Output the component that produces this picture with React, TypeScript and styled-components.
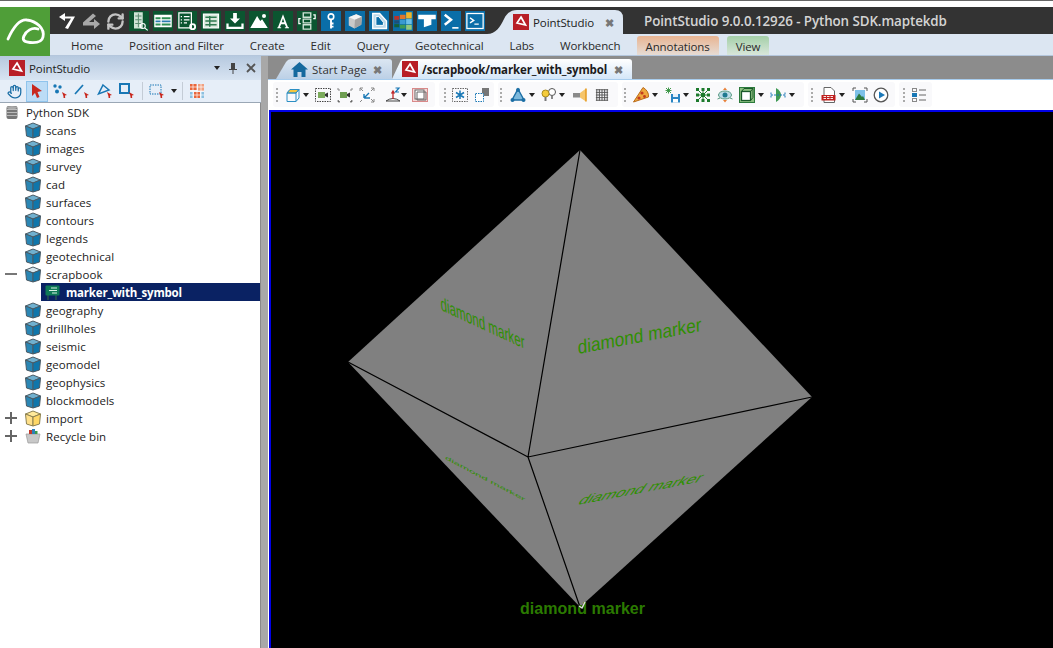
import React from "react";
import styled, { createGlobalStyle } from "styled-components";
import { Hand, RefreshCw } from "lucide-react";

const uiFont = `"Open Sans", "Noto Sans", sans-serif`;

const GlobalStyle = createGlobalStyle`
  html, body { margin: 0; padding: 0; background: #fff; }
  body { font-family: ${uiFont}; font-size: 12px; color: #222; }
`;

const Page = styled.div`
  width: 1053px;
  height: 648px;
  overflow: hidden;
  display: flex;
  flex-direction: column;
  border-top: 1px solid #666;
  box-sizing: border-box;
`;

const TopGap = styled.div`
  height: 6px;
  background: #fff;
`;

const Header = styled.div`
  display: flex;
  height: 49px;
`;

const Logo = styled.div`
  width: 50px;
  height: 49px;
  background: #4f9e38;
  flex: none;
`;

const HeaderRight = styled.div`
  flex: 1;
  display: flex;
  flex-direction: column;
`;

const QuickBar = styled.div`
  height: 27px;
  background: #333;
  display: flex;
  align-items: flex-end;
`;

const QuickIcons = styled.div`
  display: flex;
  align-self: flex-start;
  margin-top: 4px;
  padding-left: 8px;
  height: 20px;
  width: 437px;
  flex: none;
  box-sizing: border-box;
`;

const PlainQuick = styled.div<{ $ml: number; $w: number }>`
  width: ${(p) => p.$w}px;
  margin-left: ${(p) => p.$ml}px;
  height: 20px;
  display: flex;
  align-items: center;
  justify-content: center;
  flex: none;
`;

const QuickTile = styled.div<{ $bg: string }>`
  width: 20px;
  height: 20px;
  margin-left: 4px;
  flex: none;
  background: ${(p) => p.$bg};
  display: flex;
  align-items: center;
  justify-content: center;
`;

const AppTab = styled.div`
  width: 136px;
  height: 24px;
  background: #dce6f2;
  flex: none;
  display: flex;
  align-items: center;
  clip-path: path("M0 24 C9 24 13 17 17 9 C20 3 24 0 30 0 L128 0 Q136 0 136 8 L136 24 Z");
  padding-left: 26px;
  box-sizing: border-box;
  font-size: 11.5px;
  letter-spacing: -0.1px;
  color: #222;
`;

const AppTabLabel = styled.span`
  margin-left: 4px;
`;

const CloseGlyph = styled.span<{ $ml: number }>`
  margin-left: ${(p) => p.$ml}px;
  font-size: 11px;
  font-weight: 700;
  color: #777;
  line-height: 1;
`;

const WindowTitle = styled.div`
  margin-left: 21px;
  align-self: center;
  color: #d4d4d4;
  font-size: 13.4px;
  font-weight: 600;
  white-space: nowrap;
  letter-spacing: -0.1px;
`;

const RibbonTabs = styled.div`
  height: 22px;
  background: #dce6f2;
  display: flex;
  align-items: flex-end;
  padding-left: 8px;
  border-bottom: 1px solid #b4c6dc;
  box-sizing: border-box;
`;

const RibbonTab = styled.div`
  height: 21px;
  line-height: 23px;
  padding: 0 13px;
  white-space: nowrap;
  font-size: 11.5px;
  letter-spacing: -0.1px;
  color: #2a2a2a;
`;

const ContextTab = styled(RibbonTab)<{ $from: string; $to: string; $ml: number }>`
  padding: 0 9px;
  height: 19px;
  line-height: 21px;
  margin-left: ${(p) => p.$ml}px;
  border-radius: 3px 3px 0 0;
  background: linear-gradient(${(p) => p.$from}, ${(p) => p.$to});
`;

const Body = styled.div`
  flex: 1;
  display: flex;
  min-height: 0;
`;

const LeftPanel = styled.div`
  width: 261px;
  flex: none;
  display: flex;
  flex-direction: column;
  background: #d9e5f3;
`;

const PanelHeader = styled.div`
  height: 24px;
  display: flex;
  align-items: center;
  padding-left: 9px;
  background: linear-gradient(#b6c9df, #d8e4f2);
  font-size: 11.5px;
  letter-spacing: -0.1px;
  color: #222;
`;

const PanelTitle = styled.span`
  margin-left: 4px;
  flex: 1;
`;

const PanelControls = styled.div`
  display: flex;
  align-items: center;
  gap: 8px;
  padding-right: 5px;
`;

const PanelBar = styled.div`
  height: 23px;
  display: flex;
  align-items: center;
  background: #e6eef8;
  border-bottom: 1px solid #9aa7b5;
  box-sizing: border-box;
`;

const Selected = styled.div<{ $ml: number }>`
  width: 22px;
  height: 21px;
  margin-left: ${(p) => p.$ml}px;
  flex: none;
  background: #bcdcf6;
  border: 1px solid #90c4ec;
  box-sizing: border-box;
  display: flex;
  align-items: center;
  justify-content: center;
`;

const BarSep = styled.div<{ $ml: number }>`
  width: 1px;
  height: 18px;
  margin-left: ${(p) => p.$ml}px;
  background: #c4ccd6;
  flex: none;
`;

const Tree = styled.div`
  flex: 1;
  background: #fff;
  border-right: 1px solid #8a8a8a;
  font-size: 11.5px;
`;

const Row = styled.div`
  height: 18px;
  display: flex;
  align-items: center;
  white-space: nowrap;
`;

const Expander = styled.div`
  width: 25px;
  height: 18px;
  flex: none;
  display: flex;
  align-items: center;
  padding-left: 5px;
  box-sizing: border-box;
`;

const RowLabel = styled.span`
  margin-left: 5px;
  color: #222;
  letter-spacing: 0.05px;
`;

const RootRow = styled(Row)`
  padding-left: 6px;
`;

const RootLabel = styled(RowLabel)`
  margin-left: 8px;
`;

const SelectedRow = styled(Row)`
  margin-left: 41px;
  background: #0a2263;
  padding-left: 4px;
`;

const SelectedLabel = styled.span`
  margin-left: 6px;
  color: #fff;
  font-weight: 700;
  font-size: 11.5px;
  letter-spacing: -0.2px;
`;

const Splitter = styled.div`
  width: 7px;
  flex: none;
  background: #a8a8a8;
`;

const DocArea = styled.div`
  flex: 1;
  display: flex;
  flex-direction: column;
  min-width: 0;
`;

const DocTabs = styled.div`
  height: 24px;
  flex: none;
  background: #8c8c8c;
  display: flex;
  align-items: flex-end;
  padding-left: 8px;
  box-sizing: border-box;
  border-bottom: 1px solid #a8cdee;
`;

const DocTab = styled.div<{ $active?: boolean; $w: number }>`
  width: ${(p) => p.$w}px;
  height: 20px;
  flex: none;
  display: flex;
  align-items: center;
  box-sizing: border-box;
  padding-left: ${(p) => (p.$active ? 10 : 15)}px;
  background: ${(p) => (p.$active ? "linear-gradient(#fff, #d4e6f8)" : "linear-gradient(#dbe6f2, #bcd0e6)")};
  clip-path: ${(p) => (p.$active
    ? `path("M0 20 L8 3 Q9 0 12 0 L${p.$w - 3} 0 Q${p.$w} 0 ${p.$w} 3 L${p.$w} 20 Z")`
    : `path("M0 20 L10 3 Q12 0 15 0 L${p.$w - 3} 0 Q${p.$w} 0 ${p.$w} 3 L${p.$w} 20 Z")`)};
  font-size: 11.5px;
  font-weight: ${(p) => (p.$active ? 700 : 400)};
  letter-spacing: ${(p) => (p.$active ? "-0.12px" : "0")};
  color: ${(p) => (p.$active ? "#1a1a1a" : "#333")};
  white-space: nowrap;
`;

const DocTabLabel = styled.span`
  margin-left: 4px;
`;

const Toolbar = styled.div`
  height: 30px;
  flex: none;
  background: #fff;
  display: flex;
  gap: 4px;
  padding: 2px 0 3px 5px;
  box-sizing: border-box;
`;

const ToolGroup = styled.div<{ $w: number }>`
  width: ${(p) => p.$w}px;
  flex: none;
  display: flex;
  align-items: center;
  background: #f9f9fb;
  border-radius: 3px;
`;

const Slot = styled.div<{ $ml: number }>`
  width: 16px;
  height: 16px;
  margin-left: ${(p) => p.$ml}px;
  flex: none;
  display: flex;
  align-items: center;
  justify-content: center;
`;

const Grip = styled.div<{ $ml: number }>`
  width: 2px;
  height: 16px;
  margin-left: ${(p) => p.$ml}px;
  flex: none;
  background-image: radial-gradient(circle, #aaa 1px, transparent 1px);
  background-size: 2px 4px;
`;

const DropArrow = styled.div<{ $ml: number }>`
  width: 0;
  height: 0;
  margin-left: ${(p) => p.$ml}px;
  flex: none;
  border-left: 3.5px solid transparent;
  border-right: 3.5px solid transparent;
  border-top: 4px solid #222;
`;

const Viewport = styled.div`
  flex: 1;
  min-height: 0;
  background: #000;
  border-left: 1px solid #fff;
`;

const Scene = styled.svg`
  display: block;
  width: 784px;
  height: 538px;
  border-top: 2px solid #0000e6;
  border-left: 2px solid #0000e6;
  box-sizing: border-box;
`;

const PSMark = ({ size = 16 }: { size?: number }) => (
  <svg width={size} height={size} viewBox="0 0 16 16" style={{ flex: "none" }}>
    <rect width="16" height="16" fill="#b81e26" />
    <path d="M8 3 L12.5 11 L4 9 Z" fill="none" stroke="#fff" strokeWidth="1.7" />
  </svg>
);

const CubeIcon = ({ kind = "blue" }: { kind?: "blue" | "open" | "yellow" }) => {
  const front = kind === "yellow" ? "#ffd867" : "#0f76ab";
  const top = kind === "yellow" ? "#ffe99a" : kind === "open" ? "#d5e6ee" : "#6fb0cf";
  const edge = kind === "yellow" ? "#8b8050" : "#4a5a64";
  return (
    <svg width="16" height="17" viewBox="0 0 16 17" style={{ flex: "none" }}>
      <path d="M0.5 4 L8 1 L15.5 4 L8 7 Z" fill={top} stroke={edge} strokeWidth="1" />
      <path d="M0.5 4 L8 7 L8 16 L1.5 14 Z" fill={kind === "yellow" ? "#ffe08a" : "#2a86b4"} stroke={edge} strokeWidth="1" />
      <path d="M15.5 4 L8 7 L8 16 L14.5 14 Z" fill={front} stroke={edge} strokeWidth="1" />
    </svg>
  );
};

const DbIcon = () => (
  <svg width="12" height="15" viewBox="0 0 12 15" style={{ flex: "none" }}>
    <rect x="0.5" y="1" width="11" height="13" rx="2" fill="#777" />
    <path d="M1 4.5 H11 M1 7.5 H11 M1 10.5 H11" stroke="#bbb" strokeWidth="1" />
    <ellipse cx="6" cy="2.5" rx="5" ry="1.6" fill="#aaa" />
  </svg>
);

const BinIcon = () => (
  <svg width="16" height="16" viewBox="0 0 16 16" style={{ flex: "none" }}>
    <path d="M1 6 L15 6 L13 15 L3 15 Z" fill="#c8c8c8" stroke="#999" strokeWidth="0.7" />
    <rect x="4" y="2" width="3" height="4" fill="#c0392b" />
    <rect x="7" y="1" width="3" height="5" fill="#2c7fb8" />
    <rect x="10" y="3" width="2.5" height="3" fill="#3a9a4a" />
  </svg>
);

const MarkerIcon = () => (
  <svg width="15" height="15" viewBox="0 0 15 15" style={{ flex: "none" }}>
    <path d="M3 10 V15 M11 10 V15" stroke="#2b5d4c" strokeWidth="1.3" />
    <rect x="0.5" y="0.5" width="14" height="10" rx="1" fill="#0f7a57" />
    <path d="M6 3 H12 M4 5.5 H12 M7 8 H12" stroke="#d7f0e4" strokeWidth="1" />
  </svg>
);

const Pointer = ({ x = 10, y = 9 }: { x?: number; y?: number }) => (
  <path d={`M${x} ${y} L${x + 5} ${y + 3} L${x + 3} ${y + 3.6} L${x + 3.2} ${y + 6} L${x + 1.6} ${y + 6} L${x + 1.4} ${y + 4} Z`} fill="#c8281e" />
);

const Svg = ({ children, size = 16 }: { children: React.ReactNode; size?: number }) => (
  <svg width={size} height={size} viewBox="0 0 16 16">{children}</svg>
);

const W = "#fff";

// quick access tiles, green then blue
const quickTiles: { bg: string; icon: React.ReactNode }[] = [
  { bg: "#0b5530", icon: <Svg size={20}><rect x="4" y="1" width="7" height="13" fill="#cfe3d6" /><path d="M5 4 H10 M5 7 H10 M5 10 H10 M7.5 2 V13" stroke="#5a8a70" strokeWidth="0.8" /><circle cx="11" cy="12" r="2" fill="none" stroke="#fff" strokeWidth="0.9" /><path d="M12.5 13.5 L15 15.5" stroke="#fff" /></Svg> },
  { bg: "#0b5530", icon: <Svg size={20}><rect x="1" y="3" width="14" height="10" fill="#fff" /><path d="M2 5 H6 V6.5 H2 Z M7 5 H14 V6.5 H7 Z" fill="#2f8f55" /><path d="M2 7.5 H6 V9 H2 Z M7 7.5 H14 V9 H7 Z" fill="#2a7cb0" /><path d="M2 10 H6 V11.5 H2 Z M7 10 H14 V11.5 H7 Z" fill="#2f8f55" /></Svg> },
  { bg: "#0b5530", icon: <Svg size={20}><rect x="1.5" y="1.5" width="10" height="12" fill="none" stroke="#fff" /><path d="M3 4.5 H4 M5.5 4.5 H10 M3 7 H4 M5.5 7 H10 M3 9.5 H4 M5.5 9.5 H8" stroke="#fff" /><circle cx="12.5" cy="12.5" r="2" fill="none" stroke="#fff" strokeWidth="1.5" /></Svg> },
  { bg: "#0b5530", icon: <Svg size={20}><rect x="2" y="2.5" width="12" height="11" fill="#d8e8dc" stroke="#fff" /><path d="M3.5 5 H12.5 M3.5 8 H12.5 M3.5 11 H12.5 M7 4 V12.5" stroke="#2f7a50" strokeWidth="1.2" /></Svg> },
  { bg: "#0b5530", icon: <Svg size={20}><path d="M6.5 1.5 H9.5 V6 H12 L8 10 L4 6 H6.5 Z" fill={W} /><path d="M2 10 V13.5 H14 V10" fill="none" stroke={W} strokeWidth="1.8" /></Svg> },
  { bg: "#0b5530", icon: <Svg size={20}><path d="M1 13.5 L6.5 4 L9 8 L10.5 6.5 L15 13.5 Z" fill={W} /><circle cx="12" cy="4" r="1.6" fill={W} /></Svg> },
  { bg: "#0b5530", icon: <Svg size={20}><path d="M8 2.5 L12 13 H10.5 L9.5 10.5 H6.5 L5.5 13 H4 Z M7 9 H9 L8 6 Z M3.5 13 H6.5 V13.8 H3.5 Z M9.5 13 H12.8 V13.8 H9.5 Z" fill={W} fillRule="evenodd" /></Svg> },
  { bg: "#0b5530", icon: <Svg size={20}><path d="M5 1.5 H11 V5 H5 Z M5 6.5 H11 V9.5 H5 Z M5 11 H11 V14.5 H5 Z" fill="none" stroke="#cfe3d6" strokeWidth="1.1" /><path d="M3 6 H1.5 V10 H3 M13 3 H14.5 V6 H13" fill="none" stroke="#fff" /></Svg> },
  { bg: "#0a6ea8", icon: <Svg size={20}><circle cx="8" cy="4.5" r="2.2" fill="none" stroke={W} strokeWidth="1.3" /><path d="M8 7 V14 M8 10 H10 M8 12.5 H10" stroke={W} strokeWidth="1.5" /></Svg> },
  { bg: "#0a6ea8", icon: <Svg size={20}><path d="M3 5 L9 2.5 L13.5 4.5 L13 11 L7.5 14 L3 11.5 Z" fill="#c9c9c9" /><path d="M3 5 L8 7 L13.5 4.5 L9 2.5 Z" fill="#f4f4f4" /><path d="M8 7 L7.5 14 L13 11 L13.5 4.5 Z" fill="#a2a2a2" /></Svg> },
  { bg: "#0a6ea8", icon: <Svg size={20}><path d="M3 2 H8.5 L14 8 V14 H3 Z" fill="#bcd9ea" stroke={W} strokeWidth="1.1" /><path d="M5.5 4.5 H7.8 L11.5 9 V11.5 H5.5 Z" fill="#0a6ea8" stroke={W} strokeWidth="0.8" /></Svg> },
  { bg: "#0a6ea8", icon: <Svg size={20}><path d="M1 4 H5 V7 H1 Z" fill="#b8332a" /><path d="M5.5 3 H10 V6.5 H5.5 Z" fill="#e0762a" /><path d="M10.5 1 H15 V6 H10.5 Z" fill="#f0b429" /><path d="M1 7.5 H5 V10 H1 Z" fill="#1d4f7a" /><path d="M5.5 7 H10 V10.5 H5.5 Z" fill="#3a9ad0" /><path d="M10.5 6.5 H15 V10.5 H10.5 Z" fill="#6cc0e8" /><path d="M1 10.5 H5 V13 H1 Z" fill="#14603a" /><path d="M5.5 11 H10 V14 H5.5 Z" fill="#3f9a54" /><path d="M10.5 11 H15 V15 H10.5 Z" fill="#94c87c" /></Svg> },
  { bg: "#0a6ea8", icon: <Svg size={20}><path d="M1 3 H15 V6.5 H11.5 V11 L5.5 13 V6.5 H1 Z" fill={W} /></Svg> },
  { bg: "#0a6ea8", icon: <Svg size={20}><path d="M3 3 L8 7 L3 11" fill="none" stroke={W} strokeWidth="2" /><path d="M9 13.5 H14" stroke={W} strokeWidth="1.3" /></Svg> },
  { bg: "#0a6ea8", icon: <Svg size={20}><rect x="1.5" y="2" width="13" height="12" fill="none" stroke={W} /><path d="M4 5.5 L7 7.5 L4 9.5" fill="none" stroke={W} strokeWidth="1.1" /><path d="M7.5 10.5 H11" stroke={W} /></Svg> },
];

const ribbon = ["Home", "Position and Filter", "Create", "Edit", "Query", "Geotechnical", "Labs", "Workbench"];
const dataFolders = ["scans", "images", "survey", "cad", "surfaces", "contours", "legends", "geotechnical"];
const moreFolders = ["geography", "drillholes", "seismic", "geomodel", "geophysics", "blockmodels"];

const B = "#1877b5";

const tool = {
  cube: <Svg><path d="M2 6 L5 2.5 H14 V11 L11 14.5 H2 Z" fill="none" stroke="#2c8fc4" /><path d="M2 6 L5 2.5 H14 L11 6 Z" fill="#f5c63c" stroke="#2c8fc4" /><path d="M2 6 H11 V14.5 M11 6 L14 2.5" fill="none" stroke="#2c8fc4" /></Svg>,
  camBox: <Svg><rect x="0.5" y="1.5" width="15" height="13" fill="none" stroke="#444" strokeDasharray="1.5 1" /><rect x="3" y="5" width="7" height="6" fill="#7cab5c" /><path d="M10 7 L13 5.5 V10.5 L10 9 Z" fill="#333" /></Svg>,
  cam: <Svg><rect x="3" y="5" width="7" height="6" fill="#6f9e52" /><path d="M10 7 L13 5.5 V10.5 L10 9 Z" fill="#333" /><path d="M1 3 H3 M1 1 V3 M15 1 V3 M13 3 H15 M1 13 V15 H3 M15 13 V15 H13" stroke="#888" /></Svg>,
  arrows: <Svg><path d="M5 11 L10 6 M5 11 V7 M5 11 H9 M5 11 L11 11" stroke={B} strokeWidth="1.4" fill="none" /><path d="M1 1 L4 4 M1 4 V1 H4 M15 1 L12 4 M12 1 H15 V4 M15 15 L12 12 M15 12 V15 H12 M1 15 L3 13" stroke="#888" fill="none" /></Svg>,
  axis: <Svg><path d="M1 14 Q8 9 15 14 Z" fill="none" stroke="#444" /><path d="M8 12 V5 M6.5 6.5 L8 4 L9.5 6.5" stroke="#c0282a" fill="none" strokeWidth="1.3" /><path d="M10.5 1 H14 L10.5 5 H14" stroke={B} fill="none" strokeWidth="1.2" /></Svg>,
  frame: <Svg><rect x="0.5" y="1.5" width="15" height="13" fill="#f6d9d9" stroke="#d98a8a" /><rect x="3" y="3" width="9" height="9" fill="#fff" stroke="#666" /><path d="M5 5 H14 V13 H5 Z" fill="none" stroke="#666" /></Svg>,
  star: <Svg><rect x="0.5" y="1.5" width="15" height="13" fill="none" stroke="#666" strokeDasharray="1.5 1" /><path d="M8 3.5 V12 M4 5.5 L12 10.5 M12 5.5 L4 10.5" stroke={B} strokeWidth="1.5" /></Svg>,
  stack: <Svg><rect x="8" y="1" width="7" height="8" fill="#777" /><rect x="1.5" y="6.5" width="8" height="8" fill="#fff" stroke={B} strokeDasharray="1.5 1" /></Svg>,
  tri: <Svg><path d="M8 2 L14 13 H2 Z" fill="#7cb8dc" stroke="#1b6ea5" strokeWidth="1.4" /><circle cx="8" cy="3" r="2" fill="#1b6ea5" /><circle cx="2.5" cy="13" r="2" fill="#1b6ea5" /><circle cx="13.5" cy="13" r="2" fill="#1b6ea5" /></Svg>,
  bulb: <Svg><circle cx="11" cy="5" r="3.5" fill="#fff" stroke="#555" /><path d="M10 9 H12 V12 H10 Z" fill="#888" /><circle cx="4.5" cy="6.5" r="3.5" fill="#f5cc3c" stroke="#a88a20" /><path d="M3.5 10 H5.5 V14 H3.5 Z" fill="#777" /></Svg>,
  speaker: <Svg><rect x="1" y="6" width="7" height="4.5" fill="#8a8a8a" /><path d="M8 6 L14 1.5 V14.5 L8 10.5 Z" fill="#f6c56a" /><path d="M14 1.5 V14.5" stroke="#e59a20" strokeWidth="1.5" /></Svg>,
  grid: <Svg size={14}><path d="M2 1.5 V14.5 M5 1.5 V14.5 M8 1.5 V14.5 M11 1.5 V14.5 M14 1.5 V14.5 M1 2 H15 M1 5 H15 M1 8 H15 M1 11 H15 M1 14 H15" stroke="#555" strokeWidth="1.1" /></Svg>,
  pizza: <Svg><path d="M0.5 15 L10 0.5 Q16 4 15.5 10 Z" fill="#efa83e" stroke="#b96a18" /><circle cx="9" cy="6" r="1.6" fill="#c43c1e" /><circle cx="6" cy="11" r="1.6" fill="#c43c1e" /><circle cx="11.5" cy="9.5" r="1.4" fill="#c43c1e" /></Svg>,
  floppy: <Svg><path d="M1 1 L6 6 M6 1 L1 6 M3.5 0.5 V6.5 M0.5 3.5 H6.5" stroke="#2f8f3a" strokeWidth="0.9" /><path d="M6 7 H15 V15.5 H6 Z" fill="#2a86c4" /><rect x="8" y="7" width="5" height="3" fill="#e8f2fa" /><rect x="8" y="12" width="5" height="3.5" fill="#fff" /></Svg>,
  mesh: <Svg><path d="M2.5 2.5 L13.5 13.5 M13.5 2.5 L2.5 13.5 M8 2 V14 M2 8 H14" stroke="#1c7a2c" strokeWidth="1" /><path d="M1 1 H4 V4 H1 Z M6.5 1 H9.5 V4 H6.5 Z M12 1 H15 V4 H12 Z M1 6.5 H4 V9.5 H1 Z M6 6 H10 V10 H6 Z M12 6.5 H15 V9.5 H12 Z M1 12 H4 V15 H1 Z M6.5 12 H9.5 V15 H6.5 Z M12 12 H15 V15 H12 Z" fill="#1c7a2c" /></Svg>,
  eye: <Svg><ellipse cx="8" cy="8" rx="6.5" ry="4" fill="#bcdce8" stroke="#5a9a80" /><circle cx="8" cy="8" r="2.5" fill="#1e7a90" /><path d="M8 0.5 L10 3 H6 Z M8 15.5 L6 13 H10 Z" fill="#e8813a" /><path d="M0.5 12 L3 11 M15.5 12 L13 11" stroke="#5a9a80" /></Svg>,
  greenCube: <Svg><rect x="0.5" y="0.5" width="15" height="15" fill="#8cc080" stroke="#2c7a3c" /><rect x="2.5" y="4.5" width="9" height="9" fill="#fff" stroke="#1a5a2a" strokeWidth="1.3" /><path d="M2.5 4.5 L5 1.5 H14 L11.5 4.5 M11.5 13.5 L14 10.5 V1.5" fill="none" stroke="#1a5a2a" /></Svg>,
  mirror: <Svg><path d="M6 1 Q11 4 11 8 Q11 12 6 15 Z" fill="#3f9a54" /><path d="M1 8 H15 M1 5.5 V10.5 M15 5.5 V10.5" stroke={B} strokeDasharray="2 1" /></Svg>,
  pdf: <Svg><path d="M3 0.5 H10 L13.5 4 V15.5 H3 Z" fill="#fff" stroke="#666" /><rect x="0.5" y="8" width="14" height="5.5" fill="#c0201f" /><path d="M2.5 9.5 H13 M2.5 11.5 H13" stroke="#fff" strokeWidth="0.9" strokeDasharray="2.5 1" /></Svg>,
  image: <Svg><path d="M1 4 V1 H4 M12 1 H15 V4 M15 12 V15 H12 M4 15 H1 V12" fill="none" stroke="#555" /><rect x="3" y="3" width="10" height="10" fill="#7cc0e8" /><path d="M3 13 L7 6.5 L10 10 L11 9 L13 13 Z" fill="#2c7a3c" /></Svg>,
  play: <Svg><circle cx="8" cy="8" r="6.8" fill="#fff" stroke="#555" strokeWidth="1.3" /><path d="M6 4.5 L12 8 L6 11.5 Z" fill="#1b78b8" /></Svg>,
  list: <Svg><rect x="1.5" y="1.5" width="4" height="3" fill="none" stroke="#888" /><rect x="1" y="6" width="5" height="4" fill={B} /><rect x="1.5" y="11.5" width="4" height="3" fill="none" stroke="#888" /><path d="M8 3 H15 M8 8 H15 M8 13 H15" stroke="#666" /></Svg>,
};

type Item = { grip?: boolean; drop?: boolean; icon?: React.ReactNode; ml: number };

const groups: { w: number; items: Item[] }[] = [
  { w: 162, items: [{ grip: true, ml: 3 }, { icon: tool.cube, ml: 7 }, { drop: true, ml: 2 }, { icon: tool.camBox, ml: 6 }, { icon: tool.cam, ml: 6 }, { icon: tool.arrows, ml: 6 }, { icon: tool.axis, ml: 10 }, { drop: true, ml: 0 }, { icon: tool.frame, ml: 5 }] },
  { w: 55, items: [{ grip: true, ml: 5 }, { icon: tool.star, ml: 6 }, { icon: tool.stack, ml: 6 }] },
  { w: 120, items: [{ grip: true, ml: 2 }, { icon: tool.tri, ml: 8 }, { drop: true, ml: 3 }, { icon: tool.bulb, ml: 6 }, { drop: true, ml: 2 }, { icon: tool.speaker, ml: 7 }, { icon: tool.grid, ml: 6 }] },
  { w: 182, items: [{ grip: true, ml: 2 }, { icon: tool.pizza, ml: 7 }, { drop: true, ml: 3 }, { icon: tool.floppy, ml: 7 }, { drop: true, ml: 2 }, { icon: tool.mesh, ml: 6 }, { icon: tool.eye, ml: 6 }, { icon: tool.greenCube, ml: 6 }, { drop: true, ml: 3 }, { icon: tool.mirror, ml: 6 }, { drop: true, ml: 3 }] },
  { w: 87, items: [{ grip: true, ml: 3 }, { icon: tool.pdf, ml: 8 }, { drop: true, ml: 2 }, { icon: tool.image, ml: 7 }, { icon: tool.play, ml: 5 }] },
  { w: 33, items: [{ grip: true, ml: 4 }, { icon: tool.list, ml: 6 }] },
];

const ToolItems = ({ items }: { items: Item[] }) => (
  <>
    {items.map((it, i) => {
      if (it.grip) return <Grip key={i} $ml={it.ml} />;
      if (it.drop) return <DropArrow key={i} $ml={it.ml} />;
      return <Slot key={i} $ml={it.ml}>{it.icon}</Slot>;
    })}
  </>
);

const FaceLabel = styled.text<{ $bold?: boolean }>`
  font-family: "Liberation Sans", Arial, sans-serif;
  font-size: 16px;
  font-weight: ${(p) => (p.$bold ? 700 : 400)};
  fill: ${(p) => (p.$bold ? "#2b7a00" : "#2f8f00")};
`;

const faces = [
  "matrix(.727 .338 .1 1.2 441 310)",
  "matrix(1.07 -.2 .05 1.2 578 354)",
  "matrix(1.06 -.2 -.6 .85 577 505)",
  "matrix(.69 .365 -.05 .3 445 459)",
];

const Plus = () => (
  <svg width="12" height="12"><path d="M0 6 H12 M6 0 V12" stroke="#666" strokeWidth="2" /></svg>
);

export default function App() {
  return (
    <Page>
      <GlobalStyle />
      <TopGap />
      <Header>
        <Logo>
          <svg width="50" height="49" viewBox="0 0 50 49">
            <path d="M8 32 C13 21 20 12 27 13 C36 14 45 21 43 30 C42 35 36 36 30 35.5 C24 35 22 33 24 29 C26 24 32 20 38 22" fill="none" stroke="#fff" strokeWidth="2.8" strokeLinecap="round" />
          </svg>
        </Logo>
        <HeaderRight>
          <QuickBar>
            <QuickIcons>
              <PlainQuick $ml={0} $w={18}>
                <svg width="18" height="18" viewBox="0 0 18 18"><path d="M7 1 L1 5 L7 9 L7 6.5 L13 6.5 L7 16 L10 17 L17 4.5 L7 4.5 Z" fill="#fff" /></svg>
              </PlainQuick>
              <PlainQuick $ml={6} $w={18}>
                <svg width="18" height="18" viewBox="0 0 18 18"><path d="M11 1.5 L14 4 L7 10 H12 V7 L18 12 L12 17 V13.5 H1 V10.5 Z" fill="#a8a8a8" /></svg>
              </PlainQuick>
              <PlainQuick $ml={5} $w={20}>
                <RefreshCw size={19} color="#c4c4c4" strokeWidth={3} />
              </PlainQuick>
              {quickTiles.map((t, i) => (
                <QuickTile key={i} $bg={t.bg}>{t.icon}</QuickTile>
              ))}
            </QuickIcons>
            <AppTab>
              <PSMark />
              <AppTabLabel>PointStudio</AppTabLabel>
              <CloseGlyph $ml={11}>✖</CloseGlyph>
            </AppTab>
            <WindowTitle>PointStudio 9.0.0.12926 - Python SDK.maptekdb</WindowTitle>
          </QuickBar>
          <RibbonTabs>
            {ribbon.map((t) => <RibbonTab key={t}>{t}</RibbonTab>)}
            <ContextTab $from="#e8b492" $to="#e6dcd4" $ml={3}>Annotations</ContextTab>
            <ContextTab $from="#a4cfa8" $to="#d8e6da" $ml={8}>View</ContextTab>
          </RibbonTabs>
        </HeaderRight>
      </Header>
      <Body>
        <LeftPanel>
          <PanelHeader>
            <PSMark />
            <PanelTitle>PointStudio</PanelTitle>
            <PanelControls>
              <DropArrow $ml={0} />
              <svg width="10" height="12" viewBox="0 0 10 12"><path d="M3 1 H7 V7 H9 V8 H5.5 V12 H4.5 V8 H1 V7 H3 Z" fill="#444" /></svg>
              <svg width="10" height="10" viewBox="0 0 10 10"><path d="M1 1 L9 9 M9 1 L1 9" stroke="#555" strokeWidth="1.8" /></svg>
            </PanelControls>
          </PanelHeader>
          <PanelBar>
            <Slot $ml={6}><Hand size={15} color="#1b6ea5" /></Slot>
            <Selected $ml={4}>
              <Svg><path d="M3 1 L13 8 L8.5 9 L10.5 14 L8 15 L6 10 L3 13 Z" fill="#c8281e" /></Svg>
            </Selected>
            <Slot $ml={4}><Svg><circle cx="3" cy="3" r="1.7" fill={B} /><circle cx="8" cy="4" r="1.7" fill={B} /><circle cx="5" cy="8.5" r="2" fill={B} /><Pointer /></Svg></Slot>
            <Slot $ml={6}><Svg><path d="M1 11 L9 2" stroke={B} strokeWidth="1.7" /><Pointer /></Svg></Slot>
            <Slot $ml={7}><Svg><path d="M6 2 L12 7 L1.5 11 Z" fill="none" stroke={B} strokeWidth="1.5" /><Pointer /></Svg></Slot>
            <Slot $ml={6}><Svg><rect x="1" y="1" width="9" height="9" fill="none" stroke={B} strokeWidth="2" /><Pointer /></Svg></Slot>
            <BarSep $ml={7} />
            <Slot $ml={6}><Svg><rect x="1" y="2" width="11" height="9" fill="none" stroke={B} strokeDasharray="1.5 1" /><Pointer /></Svg></Slot>
            <DropArrow $ml={6} />
            <BarSep $ml={5} />
            <Slot $ml={6}><Svg><path d="M1 1 H8 V7 H1 Z M5 9 H11 V15 H5 Z" fill="#e8673c" /><path d="M9 1 H15 V8 H9 Z" fill="#f0a080" /><path d="M1 9 H4 V15 H1 Z M12 9 H15 V15 H12 Z" fill="#8cc0e0" /><path d="M1 4 H15 M1 8 H15 M1 12 H15 M4 1 V15 M8 1 V15 M12 1 V15" stroke="#fff" strokeWidth="0.7" /></Svg></Slot>
          </PanelBar>
          <Tree>
            <RootRow><DbIcon /><RootLabel>Python SDK</RootLabel></RootRow>
            {dataFolders.map((f) => (
              <Row key={f}><Expander /><CubeIcon /><RowLabel>{f}</RowLabel></Row>
            ))}
            <Row>
              <Expander><svg width="12" height="2"><rect width="12" height="2" fill="#777" /></svg></Expander>
              <CubeIcon kind="open" /><RowLabel>scrapbook</RowLabel>
            </Row>
            <SelectedRow><MarkerIcon /><SelectedLabel>marker_with_symbol</SelectedLabel></SelectedRow>
            {moreFolders.map((f) => (
              <Row key={f}><Expander /><CubeIcon /><RowLabel>{f}</RowLabel></Row>
            ))}
            <Row><Expander><Plus /></Expander><CubeIcon kind="yellow" /><RowLabel>import</RowLabel></Row>
            <Row><Expander><Plus /></Expander><BinIcon /><RowLabel>Recycle bin</RowLabel></Row>
          </Tree>
        </LeftPanel>
        <Splitter />
        <DocArea>
          <DocTabs>
            <DocTab $w={116}>
              <svg width="17" height="15" viewBox="0 0 17 15"><path d="M8.5 0 L17 7.5 H14.5 V15 H10.5 V10 H6.5 V15 H2.5 V7.5 H0 Z" fill="#15699e" /></svg>
              <DocTabLabel>Start Page</DocTabLabel>
              <CloseGlyph $ml={6}>✖</CloseGlyph>
            </DocTab>
            <DocTab $active $w={240}>
              <PSMark />
              <DocTabLabel>/scrapbook/marker_with_symbol</DocTabLabel>
              <CloseGlyph $ml={7}>✖</CloseGlyph>
            </DocTab>
          </DocTabs>
          <Toolbar>
            {groups.map((g, i) => (
              <ToolGroup key={i} $w={g.w}><ToolItems items={g.items} /></ToolGroup>
            ))}
          </Toolbar>
          <Viewport>
            <Scene viewBox="271 112 782 536">
              <path d="M580 150 L812 397 L580 607 L348 362 Z" fill="#808080" />
              <path d="M580 150 L528 457 M348 362 L528 457 M812 397 L528 457 M528 457 L580 607" stroke="#000" strokeWidth="1.2" fill="none" />
              {faces.map((m) => (
                <FaceLabel key={m} transform={m}>diamond marker</FaceLabel>
              ))}
              <FaceLabel $bold x="520" y="614" textLength="125">diamond marker</FaceLabel>
              <path d="M579 606 L582 608 L585 602" stroke="#ddd" strokeWidth="1.5" fill="none" />
            </Scene>
          </Viewport>
        </DocArea>
      </Body>
    </Page>
  );
}
